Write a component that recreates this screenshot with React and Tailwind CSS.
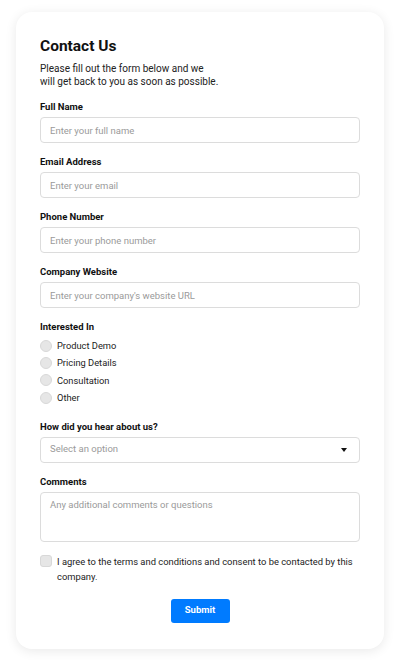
import { useState } from 'react';

const fields = [
  { label: 'Full Name', placeholder: 'Enter your full name' },
  { label: 'Email Address', placeholder: 'Enter your email' },
  { label: 'Phone Number', placeholder: 'Enter your phone number' },
  { label: 'Company Website', placeholder: "Enter your company's website URL" },
];

const interests = ['Product Demo', 'Pricing Details', 'Consultation', 'Other'];

function Label({ children }) {
  return <div className="text-[9.5px] leading-[13px] font-bold text-[#111]">{children}</div>;
}

export default function App() {
  const [interest, setInterest] = useState('');
  const [agree, setAgree] = useState(false);

  return (
    <div className="min-h-screen bg-white px-4 pt-3 pb-3 font-['Roboto',sans-serif] text-[#1f1f1f]">
      <div className="rounded-2xl bg-white px-6 pt-6 pb-[26px] shadow-[0_2px_12px_rgba(0,0,0,0.09)]">
        <h1 className="text-[15.5px] leading-[20px] font-bold text-[#111]">Contact Us</h1>
        <p className="mt-[6px] text-[10px] leading-[13px] text-[#222]">
          Please fill out the form below and we
          <br />
          will get back to you as soon as possible.
        </p>

        <div className="mt-[12px] flex flex-col gap-3">
          {fields.map((f) => (
            <div key={f.label} className="flex flex-col gap-1">
              <Label>{f.label}</Label>
              <input
                placeholder={f.placeholder}
                className="h-[26px] w-full rounded-[4px] border border-[#dcdcdc] px-[9px] text-[9.5px] outline-none placeholder:text-[#9a9a9a]"
              />
            </div>
          ))}

          <div className="flex flex-col">
            <Label>Interested In</Label>
            <div className="mt-[4px] flex flex-col">
              {interests.map((i) => (
                <label key={i} className="flex h-[17.4px] cursor-pointer items-center gap-[5px]">
                  <span
                    onClick={() => setInterest(i)}
                    className={
                      interest === i
                        ? 'h-[12px] w-[12px] rounded-full border-[3px] border-[#007bff] bg-white'
                        : 'h-[12px] w-[12px] rounded-full border border-[#d8d8d8] bg-[#e6e6e6]'
                    }
                  />
                  <span className="text-[9.3px] text-[#222]">{i}</span>
                </label>
              ))}
            </div>
          </div>

          <div className="mt-[1px] flex flex-col gap-1">
            <Label>How did you hear about us?</Label>
            <div className="flex h-[26px] items-center justify-between rounded-[4px] border border-[#dcdcdc] px-[9px]">
              <span className="text-[9.5px] text-[#9a9a9a]">Select an option</span>
              <svg width="6" height="4" viewBox="0 0 6 4" className="mr-[3px]">
                <path d="M0 0h6L3 4z" fill="#111" />
              </svg>
            </div>
          </div>

          <div className="flex flex-col gap-1">
            <Label>Comments</Label>
            <textarea
              placeholder="Any additional comments or questions"
              className="h-[50px] w-full resize-none rounded-[4px] border border-[#dcdcdc] px-[9px] py-[5px] text-[9.5px] leading-[13px] outline-none placeholder:text-[#9a9a9a]"
            />
          </div>

          <label className="flex items-start gap-[5px]">
            <span
              onClick={() => setAgree(!agree)}
              className={
                agree
                  ? 'mt-[1.5px] h-[12px] w-[12px] shrink-0 rounded-[3px] bg-[#007bff]'
                  : 'mt-[1.5px] h-[12px] w-[12px] shrink-0 rounded-[3px] border border-[#d8d8d8] bg-[#e6e6e6]'
              }
            />
            <span className="text-[9.4px] leading-[15px] text-[#222]">
              I agree to the terms and conditions and consent to be contacted by this company.
            </span>
          </label>
        </div>

        <div className="mt-[15px] flex justify-center">
          <button className="h-[24px] w-[59px] rounded-[3px] bg-[#007bff] text-[9.5px] font-bold text-white">
            Submit
          </button>
        </div>
      </div>
    </div>
  );
}
